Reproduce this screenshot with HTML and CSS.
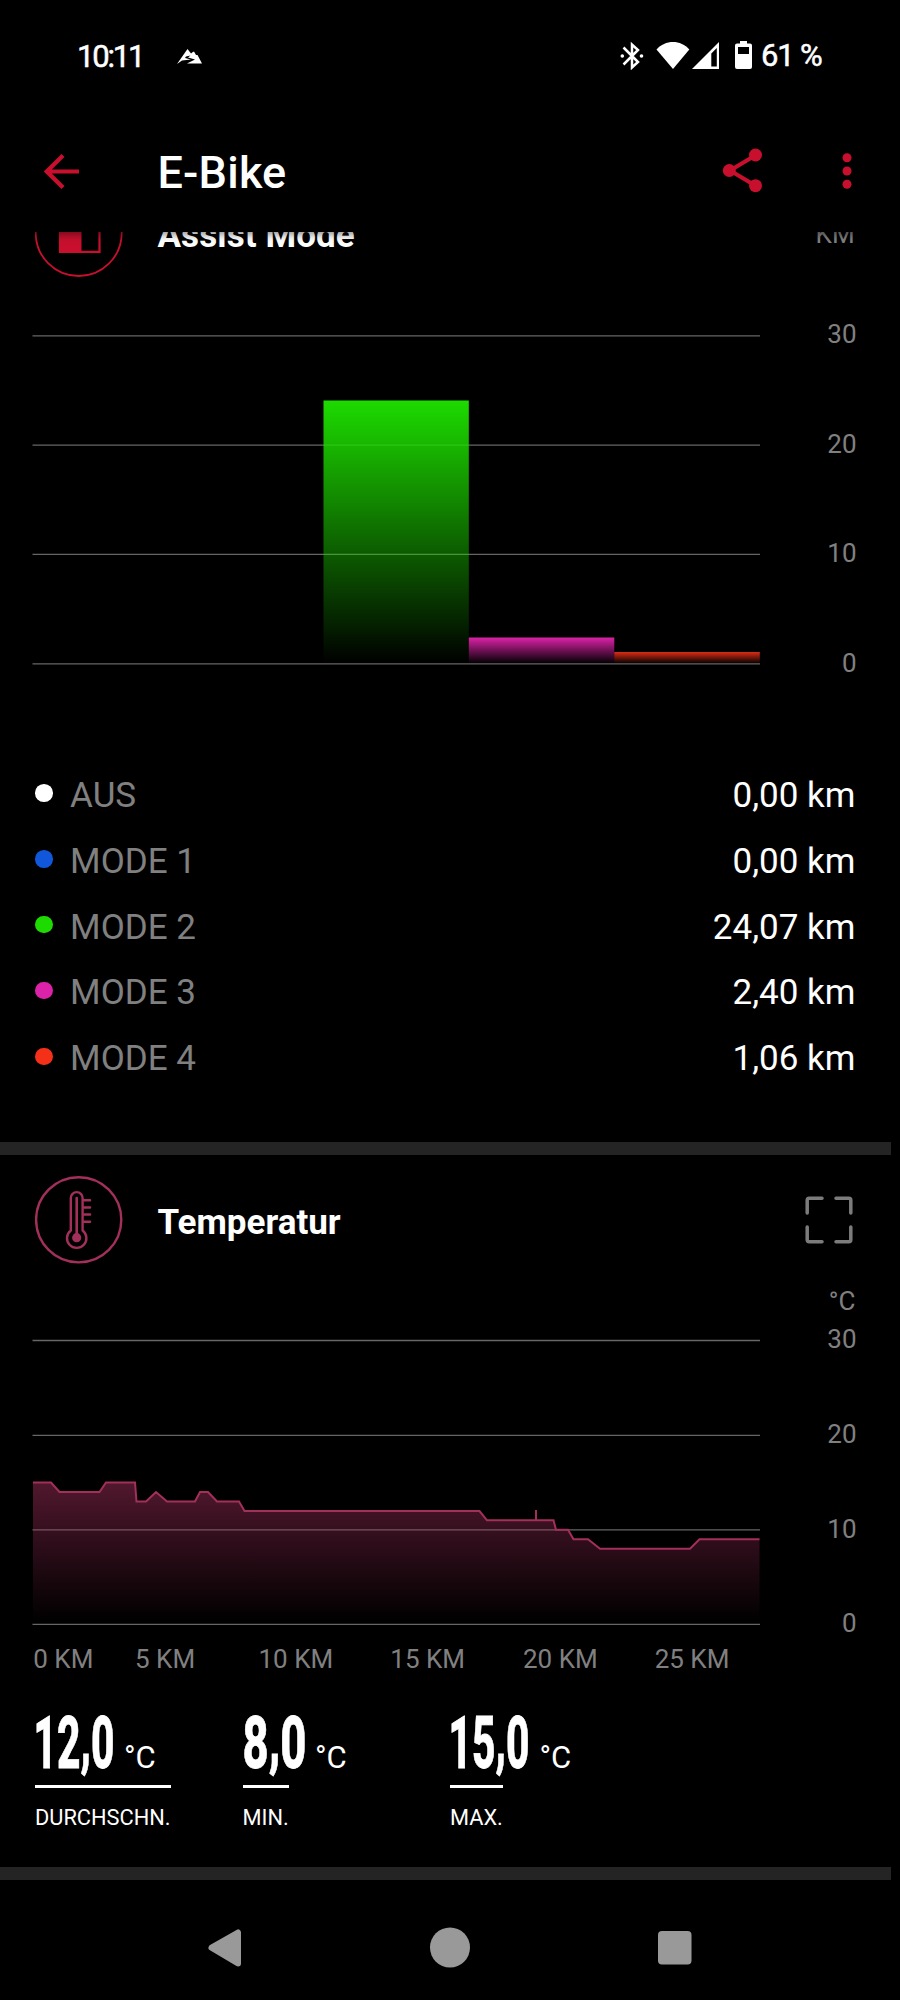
FILE: index.html
```html
<!DOCTYPE html>
<html lang="de">
<head>
<meta charset="utf-8">
<title>E-Bike</title>
<link rel="stylesheet" href="styles.css">
</head>
<body>
<div class="status">
  <span class="clock">10:11</span>
  <svg class="peak" width="26" height="16" viewBox="0 0 26 16"><path fill="#fff" d="M0 15 10.500 0 14 4.500 15.500 3.200 17 2.500 19 6 20.500 6 25 14.500H10L18 10.500 11 8.500 13.500 6.500 9 7.500 8 9 14 10.500 5 11.500Z"/></svg>
  <svg class="icons" width="136" height="30" viewBox="618 40 136 30" fill="#fff">
    <path fill="none" stroke="#fff" stroke-width="2.500" d="M623.500 47.500 638 62 632 67.500V44.500L638 50 623.500 64.500"/>
    <circle cx="622.300" cy="56" r="1.800"/><circle cx="641.500" cy="56" r="1.800"/>
    <path d="M656.500 49.500C665 39.500 681 39.500 689.300 49.500L673 69Z"/>
    <path fill-rule="evenodd" d="M692 69 719 42V69ZM711.300 53.500 716.800 48V66.500H711.300Z"/>
    <path fill-rule="evenodd" d="M740 41H747V43.500H750Q752 43.500 752 45.500V67Q752 69 750 69H737Q735 69 735 67V45.500Q735 43.500 737 43.500H740ZM738 47V54H749V47Z"/>
  </svg>
  <span class="percent">61 %</span>
</div>

<header class="appbar">
  <svg class="back" width="36" height="36" viewBox="0 0 36 36" fill="none" stroke="#c8102e" stroke-width="4.200"><path d="M19 1.500 2.800 17.500 19 33.500M2.800 17.500H35"/></svg>
  <h1>E-Bike</h1>
  <svg class="share" width="42" height="46" viewBox="0 0 42 46" fill="#c8102e"><path d="M34 8 8 23.500 34 39" fill="none" stroke="#c8102e" stroke-width="4"/><circle cx="33.500" cy="8" r="6.500"/><circle cx="7.300" cy="23.500" r="6.500"/><circle cx="33.500" cy="38.700" r="6.500"/></svg>
  <svg class="more" width="10" height="36" viewBox="0 0 10 36" fill="#c8102e"><circle cx="5" cy="4.800" r="4.500"/><circle cx="5" cy="18" r="4.500"/><circle cx="5" cy="31.200" r="4.500"/></svg>
</header>

<main>
  <section class="assist">
    <div class="head">
      <svg class="badge" width="88" height="88" viewBox="0 0 88 88" fill="none" stroke="#c8102e"><circle cx="43.700" cy="44" r="43" stroke-width="1.800"/><path stroke-width="2.200" d="M25 25H64.500V62.800H25Z"/><path fill="#c8102e" stroke="none" d="M24 24H46.500V64H24Z"/></svg>
      <h2>Assist Mode</h2>
      <span class="unit">KM</span>
    </div>
    <svg class="chart" width="900" height="443" viewBox="0 277 900 443">
      <defs>
        <linearGradient id="green" x2="0" y2="1"><stop stop-color="#1ddb00"/><stop offset="1" stop-color="#1ddb00" stop-opacity="0"/></linearGradient>
        <linearGradient id="pink" x2="0" y2="1"><stop stop-color="#dc22a8"/><stop offset="1" stop-color="#dc22a8" stop-opacity="0"/></linearGradient>
        <linearGradient id="red" x2="0" y2="1"><stop stop-color="#dc2c14"/><stop offset="1" stop-color="#dc2c14" stop-opacity="0"/></linearGradient>
      </defs>
      <path class="grid" d="M32.500 335.900H760M32.500 445.200H760M32.500 554.400H760M32.500 663.800H760"/>
      <path fill="url(#green)" d="M323.500 400.500H468.800V663.500H323.500Z"/>
      <path fill="url(#pink)" d="M468.800 637.500H614.300V663.500H468.800Z"/>
      <path fill="url(#red)" d="M614.300 652H759.800V663.500H614.300Z"/>
      <g class="axis"><text x="856.500" y="343.300">30</text><text x="856.500" y="452.600">20</text><text x="856.500" y="562.300">10</text><text x="856.500" y="671.500">0</text></g>
    </svg>
    <ul class="legend">
      <li><i class="dot off"></i><span>AUS</span><b>0,00 km</b></li>
      <li><i class="dot m1"></i><span>MODE 1</span><b>0,00 km</b></li>
      <li><i class="dot m2"></i><span>MODE 2</span><b>24,07 km</b></li>
      <li><i class="dot m3"></i><span>MODE 3</span><b>2,40 km</b></li>
      <li><i class="dot m4"></i><span>MODE 4</span><b>1,06 km</b></li>
    </ul>
  </section>

  <section class="temperature">
    <div class="head">
      <svg class="badge" width="88" height="88" viewBox="35 1176.500 88 88" fill="none" stroke="#a32f5b" stroke-width="2.400"><circle cx="78.700" cy="1220.300" r="42.600"/><path d="M70.800 1231V1198.500A5.900 5.900 0 0 1 82.600 1198.500V1231A9.700 9.700 0 1 1 70.800 1231Z"/><path stroke-width="2.600" stroke-linecap="round" d="M76.700 1198.500V1236M84 1200.700H90M84 1208H90M84 1215H90M84 1222.200H90"/><circle cx="76.700" cy="1238.200" r="4.600" fill="#a32f5b" stroke="none"/></svg>
      <h2>Temperatur</h2>
      <svg class="expand" width="48" height="48" viewBox="0 0 48 48" fill="none" stroke="#7c7c7c" stroke-width="3.500" stroke-linecap="round" stroke-linejoin="round"><path d="M2.200 17V4.200Q2.200 2.200 4.200 2.200H17M31 2.200H43.800Q45.800 2.200 45.800 4.200V17M45.800 31V43.800Q45.800 45.800 43.800 45.800H31M17 45.800H4.200Q2.200 45.800 2.200 43.800V31"/></svg>
    </div>
    <svg class="chart" width="900" height="425" viewBox="0 1265 900 425">
      <defs><linearGradient id="temp" gradientUnits="userSpaceOnUse" x1="0" y1="1482" x2="0" y2="1622"><stop stop-color="#a32f5b" stop-opacity=".5"/><stop offset="1" stop-color="#a32f5b" stop-opacity="0"/></linearGradient></defs>
      <path class="grid" d="M32.500 1340.500H760M32.500 1435.400H760M32.500 1529.800H760M32.500 1624.400H760"/>
      <path fill="url(#temp)" d="M33 1482.500H51L59.500 1492H99.500L106 1482.500H135L136.500 1501.500H146L156 1492 167 1501.500H195L200 1492H208L217 1501.500H239L244.500 1511H479.500L487 1520.300H553.500L556 1529.800H568L573.500 1539.300H588L600 1548.700H690L699.500 1539.300H759.500V1624H33Z"/>
      <path class="curve" d="M33 1482.500H51L59.500 1492H99.500L106 1482.500H135L136.500 1501.500H146L156 1492 167 1501.500H195L200 1492H208L217 1501.500H239L244.500 1511H479.500L487 1520.300H536V1510V1520.300H553.500L556 1529.800H568L573.500 1539.300H588L600 1548.700H690L699.500 1539.300H759.500"/>
      <g class="axis"><text x="855.500" y="1310">°C</text><text x="856.500" y="1348.300">30</text><text x="856.500" y="1443.300">20</text><text x="856.500" y="1537.500">10</text><text x="856.500" y="1632.300">0</text></g>
      <g class="axis distance"><text x="33.300" y="1668.300">0 KM</text><text x="135" y="1668.300">5 KM</text><text x="258.500" y="1668.300">10 KM</text><text x="390.300" y="1668.300">15 KM</text><text x="523" y="1668.300">20 KM</text><text x="654.700" y="1668.300">25 KM</text></g>
    </svg>
    <div class="stats">
      <div class="stat"><div class="value"><svg width="89" height="62"><text x="-1.500" y="61.500" textLength="81" lengthAdjust="spacingAndGlyphs">12<tspan dy="-5">,</tspan><tspan dy="5">0</tspan></text></svg><span>°C</span></div><div class="label">DURCHSCHN.</div></div>
      <div class="stat"><div class="value"><svg width="72.500" height="62"><text x="-.5" y="61.500" textLength="64" lengthAdjust="spacingAndGlyphs">8<tspan dy="-5">,</tspan><tspan dy="5">0</tspan></text></svg><span>°C</span></div><div class="label">MIN.</div></div>
      <div class="stat"><div class="value"><svg width="89.500" height="62"><text x="-1.500" y="61.500" textLength="81" lengthAdjust="spacingAndGlyphs">15<tspan dy="-5">,</tspan><tspan dy="5">0</tspan></text></svg><span>°C</span></div><div class="label">MAX.</div></div>
    </div>
  </section>
</main>

<nav>
  <svg width="900" height="120" viewBox="0 1880 900 120" fill="#999">
    <path stroke="#999" stroke-width="6" stroke-linejoin="round" d="M211.500 1947.700 238 1932.500V1963.500Z"/>
    <circle cx="450" cy="1947.500" r="20"/>
    <rect x="658" y="1931" width="33.500" height="33.500" rx="4"/>
  </svg>
</nav>
</body>
</html>
```

FILE: styles.css
```css
* { box-sizing: border-box; }
body { margin: 0; width: 900px; height: 2000px; background: #000; color: #fff; font-family: Roboto, sans-serif; display: flex; flex-direction: column; overflow: hidden; }
h1, h2, ul { margin: 0; padding: 0; }
svg { display: block; flex: none; }

.status { height: 112px; display: flex; align-items: center; padding-left: 77px; font-size: 31px; font-weight: 400; line-height: 36px; white-space: nowrap; -webkit-text-stroke: .5px #fff; }
.clock { width: 100px; letter-spacing: -2.200px; padding-top: 1px; }
.peak { margin-top: 2px; }
.icons { margin-left: 415px; margin-top: -2px; }
.percent { margin-left: 7px; letter-spacing: -1.200px; }

.appbar { height: 120px; display: flex; align-items: center; padding: 0 48px 2px 44px; background: #000; position: relative; z-index: 1; box-shadow: 0 2px 8px rgba(0, 0, 0, .5); }
.back { margin-top: 1px; }
.appbar h1 { margin-left: 77.500px; padding-top: 4px; font-size: 45px; font-weight: 500; line-height: 54px; letter-spacing: .2px; flex: 1; }
.share { margin-right: 78px; margin-top: -2px; }
.more { margin-top: -1px; }

main { flex: none; height: 1648px; overflow: hidden; }
section { display: flow-root; width: 891px; border-bottom: 13px solid #242424; }
.assist { height: 923px; }
.temperature { height: 725px; padding-top: 21px; }
.head { height: 88px; display: flex; align-items: center; padding: 0 38px 0 35px; }
.assist .head { margin-top: -43.500px; }
.head h2 { margin-left: 34.500px; padding-top: 5px; flex: 1; font-size: 35px; font-weight: 700; line-height: 42px; }
.assist h2 { padding-top: 7px; letter-spacing: .1px; }
.unit { color: #808080; font-size: 26px; line-height: 32px; padding-top: 3px; letter-spacing: .2px; }
.assist .unit { margin-right: -2px; }
.chart { width: 900px; }
.temperature .chart { margin-top: .5px; }
.grid { stroke: #666; stroke-width: 1.300; fill: none; }
.curve { stroke: #a32f5b; stroke-width: 2; fill: none; }
.axis { fill: #808080; font-size: 26px; text-anchor: end; }
.axis.distance { text-anchor: start; }

.legend { list-style: none; padding: 40.500px 35.500px 0 35px; }
.legend li { height: 65.850px; display: flex; align-items: center; font-size: 35px; line-height: 42px; }
.legend span { margin-left: 17.500px; padding-top: 6px; color: #808080; flex: 1; }
.legend b { padding-top: 6px; font-weight: 400; }
.dot { width: 17.600px; height: 17.600px; border-radius: 50%; }
.off { background: #fff; }
.m1 { background: #1157dc; }
.m2 { background: #1ddb00; }
.m3 { background: #dc22a8; }
.m4 { background: #f53018; }

.stats { display: grid; grid-template-columns: repeat(3, 207.500px); padding: 16.500px 0 0 35px; }
.value { display: flex; align-items: baseline; height: 79px; font-size: 31px; line-height: 38px; }
.value svg { overflow: visible; fill: #fff; stroke: #fff; stroke-width: .8px; font-size: 73px; font-weight: 800; }
.label { width: fit-content; border-top: 3px solid #fff; padding-top: 16px; font-size: 21.800px; line-height: 28px; }
nav { height: 120px; }
```
